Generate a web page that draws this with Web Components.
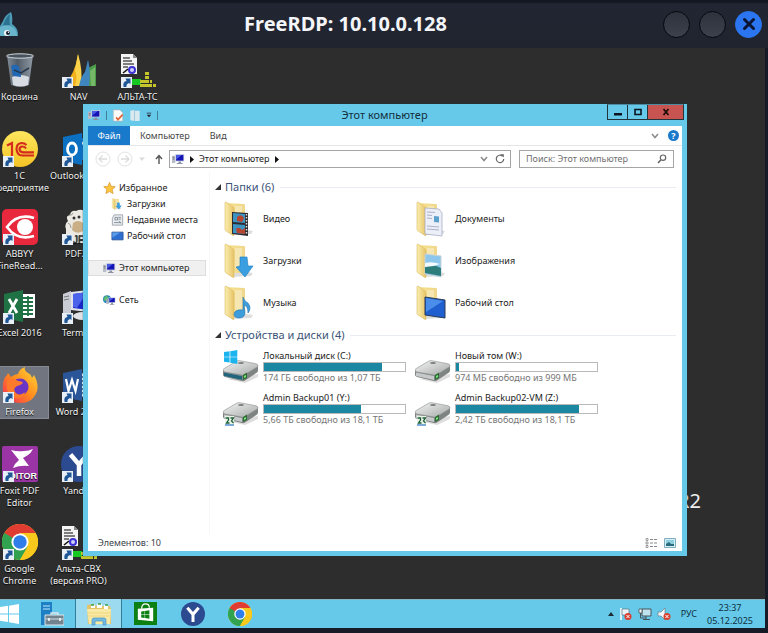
<!DOCTYPE html>
<html lang="ru">
<head>
<meta charset="utf-8">
<title>FreeRDP: 10.10.0.128</title>
<style>
  html, body { height: 100%; margin: 0; }
  body {
    overflow: hidden; background: #171b28;
    font-family: "Noto Sans", "Open Sans", sans-serif;
    font-size: 9px; line-height: 12px; color: #222;
    --aero: #66c9ea;
  }
</style>
</head>
<body>
<rdp-session heading="FreeRDP: 10.10.0.128">
  <desk-top slot="screen">
    <desk-icon slot="icons" icon="trash" plain>Корзина</desk-icon>
    <desk-icon slot="icons" icon="onec">1С Предприятие</desk-icon>
    <desk-icon slot="icons" icon="abbyy">ABBYY FineRead...</desk-icon>
    <desk-icon slot="icons" icon="excel">Excel 2016</desk-icon>
    <desk-icon slot="icons" icon="firefox" selected>Firefox</desk-icon>
    <desk-icon slot="icons" icon="foxit">Foxit PDF Editor</desk-icon>
    <desk-icon slot="icons" icon="chrome">Google Chrome</desk-icon>
    <desk-icon slot="icons" icon="nav">NAV</desk-icon>
    <desk-icon slot="icons" icon="outlook">Outlook&nbsp;2016</desk-icon>
    <desk-icon slot="icons" icon="pdf">PDF24</desk-icon>
    <desk-icon slot="icons" icon="terms">Terms...</desk-icon>
    <desk-icon slot="icons" icon="word">Word 2016</desk-icon>
    <desk-icon slot="icons" icon="yandex">Yandex</desk-icon>
    <desk-icon slot="icons" icon="alta">Альта-СВХ (версия PRO)</desk-icon>
    <desk-icon slot="icons" icon="alta">АЛЬТА-ТС</desk-icon>
    <span slot="brand">R2</span>
    <explorer-window slot="windows" heading="Этот компьютер">
      <nav-item slot="nav" icon="star">Избранное</nav-item>
      <nav-item slot="nav" icon="fdownload" sub>Загрузки</nav-item>
      <nav-item slot="nav" icon="recent" sub>Недавние места</nav-item>
      <nav-item slot="nav" icon="desk" sub>Рабочий стол</nav-item>
      <nav-item slot="nav" icon="pc" spaced current>Этот компьютер</nav-item>
      <nav-item slot="nav" icon="net" spaced>Сеть</nav-item>
      <item-group heading="Папки (6)">
        <folder-tile icon="fvideo">Видео</folder-tile>
        <folder-tile icon="fdocs">Документы</folder-tile>
        <folder-tile icon="fdownload">Загрузки</folder-tile>
        <folder-tile icon="fimages">Изображения</folder-tile>
        <folder-tile icon="fmusic">Музыка</folder-tile>
        <folder-tile icon="fdesk">Рабочий стол</folder-tile>
      </item-group>
      <item-group heading="Устройства и диски (4)">
        <drive-tile icon="drivec" used="84" note="174 ГБ свободно из 1,07 ТБ">Локальный диск (C:)</drive-tile>
        <drive-tile icon="drive" used="2" note="974 МБ свободно из 999 МБ">Новый том (W:)</drive-tile>
        <drive-tile icon="driven" used="69" note="5,66 ТБ свободно из 18,1 ТБ">Admin Backup01 (Y:)</drive-tile>
        <drive-tile icon="driven" used="87" note="2,42 ТБ свободно из 18,1 ТБ">Admin Backup02-VM (Z:)</drive-tile>
      </item-group>
    </explorer-window>
  </desk-top>
  <task-bar slot="bar"></task-bar>
</rdp-session>

<script>
const monitor = (x, y, s) => `<g transform="translate(${x} ${y}) scale(${s})"><path d="M0 3h4v9H0z" fill="#b8bcc6"/><path d="M1 5h2M1 7h2" stroke="#667"/><path d="M4 1h11v9H4z" fill="#c9cfe2"/><path d="M5 2h9v7H5z" fill="#1414b4"/><path d="M5 2h7L5 8z" fill="#4a5ae0"/><path d="M8 10h3v2h2v1H6v-1h2z" fill="#8c92a4"/></g>`;
const folder = inner => `<defs><linearGradient id="a"><stop stop-color="#f6e08c"/><stop offset="1" stop-color="#efd88c"/></linearGradient><linearGradient id="b"><stop stop-color="#fbeeb0"/><stop offset="1" stop-color="#e6c468"/></linearGradient></defs><path d="M8 34l20-1 2-3-18-3z" fill="#0002"/><path d="M3 2l18 1q1 0 1 1v26H10z" fill="url(#a)"/><path d="M12 5h7v20h-7z" fill="#fff5"/><path d="M2 2q0-1 1-1l7 5q1 1 1 2v26q0 1-1 .5L3 30q-1-.5-1-2z" fill="url(#b)" stroke="#dcbb62" stroke-width=".6"/>${inner}`;
const disk = extra => `<defs><linearGradient id="a" x2="1" y2="1"><stop stop-color="#f4f4f4"/><stop offset="1" stop-color="#a6a8a8"/></linearGradient></defs><path d="M4 30l18 4 13-6v-3z" fill="#0002"/><path d="M0 21v5q0 1 2 2l17 4q2 .5 3-.5l12-8q1-1 1-2v-5z" fill="#7e8482"/><path d="M0 21q0-1 2-2l12-7q1-.6 3-.3l16 3q2 .6 2 2 0 1-1 1.500l-12 7.400q-1.500 .7-3 .5L2 23q-2-.5-2-2z" fill="url(#a)" stroke="#8b8f8f" stroke-width=".6"/><path d="M1 23.500l18 3.500v4L1 27z" fill="#c6c9c9"/><ellipse cx="18" cy="14" rx="3" ry="1" fill="#7a7e7e"/><path d="M20 26l4-2.500v5.500l-4 2z" fill="#2c6b35"/><path d="M21 27l2-1v2l-2 1z" fill="#7bea7b"/>${extra}`;
const chrome = `<circle cx="18" cy="18" r="18" fill="#f8c91c"/><path d="M2.400 9A18 18 0 0 1 33.600 9H18L10.200 22.500z" fill="#e03c31"/><path d="M2.400 9A18 18 0 0 0 18 36L25.800 22.500 18 18z" fill="#31a350"/><path d="M18 9h15.600A18 18 0 0 1 18 36l7.800-13.500z" fill="#f8c91c"/><circle cx="18" cy="18" r="8.600" fill="#fff"/><circle cx="18" cy="18" r="6.700" fill="#2f7de8"/>`;
const yandex = `<circle cx="18" cy="18" r="18" fill="#2b4a8f"/><path d="M9.500 8.500L18 18.500 26.500 8.500M18 18v12" fill="none" stroke="#fff" stroke-width="4.500"/>`;
const flagWin = (x, y, s, c) => `<path transform="translate(${x} ${y}) scale(${s})" fill="${c}" d="M0 3l8-1.200V9.500H0zM9 1.700L19 0v9.500H9zM0 10.500h8V18l-8-1.200zM9 10.500h10V20L9 18.300z"/>`;
const cross = (x, y) => `<circle cx="${x}" cy="${y}" r="3.500" fill="#d8412f"/><path d="M${x-1.500} ${y-1.500}l3 3m0-3l-3 3" stroke="#fff" stroke-width="1"/>`;

const ICONS = {
  trash: ['36 36', `<defs><linearGradient id="a"><stop stop-color="#8b97a4"/><stop offset=".4" stop-color="#56616e"/><stop offset="1" stop-color="#9aa5b0"/></linearGradient></defs><path d="M5 3l4 30q9 4 18 0l4-30z" fill="url(#a)" opacity=".9"/><path d="M10 25q8-4 17 0l-1 8q-8 3-15 0z" fill="#d7dde2"/><path d="M9 14q6-3 8 1t2 10l-8-1z" fill="#2268b5"/><path d="M12 18l7 3 8-5" stroke="#26384c" stroke-width="1.500" fill="none"/><ellipse cx="18" cy="4" rx="13.500" ry="2.200" fill="#48525c" stroke="#d4dbe0"/>`],
  onec: ['36 36', `<defs><linearGradient id="a" x2="0" y2="1"><stop stop-color="#ffe75e"/><stop offset="1" stop-color="#f3c325"/></linearGradient></defs><circle cx="18" cy="18" r="18" fill="url(#a)"/><path d="M5 14.500l5-2.500v13M24.500 14q-2-2-5-2-5 .5-5 6 .5 6.500 6 6.500H32M24 17.500q-1-2-3.500-2-3 0-3 3 .5 2.800 4 2.800H32" fill="none" stroke="#d42b1e" stroke-width="2.200"/>`],
  abbyy: ['36 36', `<rect width="36" height="36" rx="5" fill="#e8283c"/><path d="M32 9Q15 4 5 18q10 14 27 9" fill="none" stroke="#fff" stroke-width="2.600"/><circle cx="23" cy="18" r="8" fill="#fff"/>`],
  excel: ['36 36', `<path d="M18 6h15v24H18z" fill="#fff"/><path d="M20 10h11M20 14h11M20 18h11M20 22h11M20 26h11M26 8v20" stroke="#207245" stroke-width="1.800"/><path d="M2 6l19-4v32L2 30z" fill="#1f7244"/><path d="M7 11l8 14M15 11L7 25" stroke="#fff" stroke-width="2.800"/>`],
  firefox: ['36 36', `<defs><linearGradient id="a" x1="1" x2="0" y2="1"><stop stop-color="#ffe03a"/><stop offset=".5" stop-color="#ff8a1e"/><stop offset="1" stop-color="#f5245c"/></linearGradient></defs><path d="M3 10q2-1 3-4l3 4q4-3 7-3 1-5 7-7-1 4 3 6 3 1 4 5l2-3q5 9 3 16-4 12-16 12Q5 36 1 24q-1-8 2-14z" fill="url(#a)"/><circle cx="18" cy="20" r="8.500" fill="#6a35c4"/><path d="M5 14q6-4 11 0 4 0 5 2-3 3-6 3-4 2-2 6 4 5 10 0-2 8-10 6Q3 28 5 14z" fill="#ff7a2a"/>`],
  foxit: ['36 36', `<rect width="36" height="36" rx="2" fill="#9b35a6"/><path d="M9 4q7 2 13 1 5 0 9-2-2 4-5 6l-5 3 6 8q-9-1-16 2 2-5 6-8z" fill="#fff"/><text x="35" y="33" text-anchor="end" font-family="Liberation Sans,sans-serif" font-weight="bold" font-size="9" fill="#fff">EDITOR</text>`],
  chrome: ['36 36', chrome],
  yandex: ['36 36', yandex],
  nav: ['36 36', `<path d="M3 34Q14 22 17 2q3 14 1 32z" fill="#f2b01d"/><path d="M17 34q9-9 10-26 2 14 1 26z" fill="#2f78b7"/><path d="M27 34q-2-14 0-18l8-4v22z" fill="#4a9c4a"/><path d="M14 18q3 8 0 16h6q2-16-3-32z" fill="#fbd44c"/><path d="M18 34q2-10 6-14l3-12q3 12 1 26z" fill="#3f86bf"/><path d="M29 19l5-4v19h-4z" fill="#76b868"/>`],
  outlook: ['36 36', `<path d="M18 7h18v22H18z" fill="#1a77c9"/><path d="M19 10l9 8 8-8" stroke="#fff" fill="none" stroke-width="2"/><path d="M2 6l19-4v32L2 30z" fill="#0b6fc2"/><ellipse cx="11" cy="18" rx="4.500" ry="6" fill="none" stroke="#fff" stroke-width="2.800"/>`],
  word: ['36 36', `<path d="M18 6h15v24H18z" fill="#fff" stroke="#2a5699"/><path d="M20 10h11M20 14h11M20 18h11M20 22h11M20 26h11" stroke="#2a5699" stroke-width="1.600"/><path d="M2 6l19-4v32L2 30z" fill="#2a5699"/><path d="M5 12l2.500 12 3.500-11 3.500 11L17 12" stroke="#fff" fill="none" stroke-width="2.200"/>`],
  pdf: ['36 36', `<path d="M7 12q-3-5 2-6 1-5 6-4 6-3 9 1 6 0 5 6 5 4 1 9v16H5V20q-2-5 2-8z" fill="#ece9e2"/><circle cx="13" cy="9" r="1.500" fill="#333"/><circle cx="18" cy="8" r="1.500" fill="#333"/><path d="M12 14q5-4 10 0v8q-6 4-11-1z" fill="#c9ae86"/><path d="M8 6q3 1 4-2M7 14q3 1 3 5" stroke="#999" fill="none"/><text x="12" y="34" font-family="Liberation Sans,sans-serif" font-size="10" fill="#333">JF</text>`],
  terms: ['36 36', `<path d="M2 6l8-3v26l-8-3z" fill="#c9ccd4"/><path d="M3 9l5-1M3 12l5-1" stroke="#777"/><path d="M10 4l26-3v24l-26-3z" fill="#dfe2ea"/><path d="M12 6l24-3v20l-24-3z" fill="#1826c8"/><path d="M12 6l14-2-10 16-4-1z" fill="#4b62ea"/><ellipse cx="22" cy="28" rx="10" ry="4" fill="#dfe1e6"/>`],
  alta: ['36 36', `<path d="M1 2h12l4 4v16H1z" fill="#f4f4f4"/><path d="M13 2v4h4" fill="#888"/><path d="M3 6h7M3 9h9M3 12h11M3 15h5" stroke="#555" stroke-width="1.300"/><path d="M3 21l5-4" stroke="#111" stroke-width="1.600"/><circle cx="12" cy="18" r="3" fill="#cfd0ff" stroke="#3c32d2" stroke-width="2"/><path d="M12 27h9v6h-9z" fill="#15c922"/><path d="M20 28h5v3h-5zM20 32h5v3h-5zM25 20h4v3h-4zM25 24h4v3h-4zM25 28h4v3h-4zM25 32h4v3h-4zM30 28h2v3h-2zM29 32h3v3h-3zM33 32h3v3h-3z" fill="#c3c52a"/>`],
  badge: ['11 11', `<path d="M0 0h11v11H0z" fill="#e9eff6"/><path d="M2.500 10Q1.500 4.500 5.500 4L4.500 1.500H9.500v5.500L8 6Q5 7 5.500 10z" fill="#1f5695"/>`],
  dragon: ['20 28', `<path d="M0 26V16l3-5Q5 5 11 2q2 5 1 12 5 3 6 9l-1 3z" fill="#4d9bb5"/><path d="M3 15q3-8 7-11-1 7 0 11z" fill="#2a7390"/><path d="M0 17q9-4 15 2l3 7H0z" fill="#68b5cc"/><circle cx="7" cy="23" r="3" fill="#f5f5f5"/><circle cx="8" cy="23" r="2" fill="#123"/><circle cx="8.500" cy="22.300" r=".7" fill="#fff"/>`],
  closex: ['14 14', `<path d="M2.500 2.500l9 9m0-9l-9 9" stroke="#0b1430" stroke-width="3" stroke-linecap="round"/>`],
  pc: ['16 14', monitor(0, 0, 1)],
  net: ['16 14', `<circle cx="5" cy="6" r="5" fill="#2f86b8"/><path d="M2 3q3-2 4 0t-2 4-3 0zM6 8l3-2-1 5z" fill="#5cc06a"/>` + monitor(4, 3, .75)],
  star: ['14 14', `<path d="M7 .5l2 4.500 4.700.5-3.500 3.300 1 4.700L7 11.200l-4.200 2.300 1-4.700L.3 5.500 5 5z" fill="#fbc540" stroke="#d8902a" stroke-width=".8"/>`],
  recent: ['14 14', `<path d="M3 1h10v12H1V5z" fill="#e8ecef" stroke="#9aa2a8"/><path d="M4 4h3v3H4zM8 4h3M8 6h3M3 10h8M9 8l2 3" stroke="#7f8b95" fill="none"/>`],
  desk: ['14 14', `<path d="M.5 2.500h13v9H.5z" fill="#2c6fd0" stroke="#31549a"/><path d="M1 3h9l-9 6z" fill="#5b9be8"/>`],
  qdoc: ['12 14', `<path d="M1 1h7l3 3v9H1z" fill="#fbfbfb" stroke="#b6b6b6" stroke-width=".7"/><path d="M4 9l2 2.500L11 6" stroke="#e0673a" stroke-width="1.800" fill="none"/>`],
  qfolder: ['12 14', `<path d="M1 2l4-1v12l-4-1zM6 2h5v11H6z" fill="#d9e9f0"/><path d="M5 1l1 1v11l-1-1z" fill="#a9c6d6"/>`],
  qdrop: ['8 8', `<path d="M1 1.500h6" stroke="#223"/><path d="M1 3.500h6L4 7z" fill="#223"/>`],
  back: ['16 16', `<circle cx="8" cy="8" r="7" fill="none" stroke="#e2e2e2"/><path d="M12 8H4.500M7.500 4.500L4 8l3.500 3.500" stroke="#dcdcdc" fill="none" stroke-width="1.300"/>`],
  fwd: ['16 16', `<circle cx="8" cy="8" r="7" fill="none" stroke="#e2e2e2"/><path d="M4 8h7.500M8.500 4.500L12 8l-3.500 3.500" stroke="#dcdcdc" fill="none" stroke-width="1.300"/>`],
  down: ['6 4', `<path d="M0 .5h6L3 4z" fill="#dcdcdc"/>`],
  up: ['8 10', `<path d="M4 10V1.500M1 5l3-3.500L7 5" stroke="#555" stroke-width="1.400" fill="none"/>`],
  tri: ['4 7', `<path d="M0 0l4 3.500L0 7z" fill="#111"/>`],
  chev: ['8 6', `<path d="M1 1l3 3.500L7 1" fill="none" stroke="#8a8a8a" stroke-width="1.500"/>`],
  refresh: ['10 10', `<path d="M7.500 2.200A3.700 3.700 0 1 0 8.700 5" fill="none" stroke="#666" stroke-width="1.200"/><path d="M5.500 .3h3.300v3.300z" fill="#666"/>`],
  lens: ['10 10', `<circle cx="6" cy="3.700" r="2.700" fill="none" stroke="#666" stroke-width="1.200"/><path d="M4 5.800L1 9" stroke="#666" stroke-width="1.600"/>`],
  expand: ['6 6', `<path d="M6 0v6H0z" fill="#333"/>`],
  list: ['12 10', `<path d="M1 .5h2v2H1zM1 4h2v2H1zM1 7.500h2v2H1z" fill="none" stroke="#888" stroke-width=".8"/><path d="M5 1.500h3M9 1.500h3M5 5h3M9 5h3M5 8.500h3M9 8.500h3" stroke="#888"/>`],
  thumbs: ['12 10', `<path d="M.5.5h11v9H.5z" fill="#d8edf3" stroke="#7eafc0"/><path d="M2 2h8v6H2z" fill="#8cd0df"/><path d="M2 6l3-2 2 2h3v2H2z" fill="#276a7c"/>`],
  wmin: ['10 10', `<path d="M1 6h8v2.500H1z" fill="#0a1420"/>`],
  wmax: ['10 10', `<path d="M2 2.500h6v5H2z" fill="none" stroke="#0a1420" stroke-width="1.600"/>`],
  wclose: ['10 10', `<path d="M2.500 2l5 6m0-6l-5 6" stroke="#1c0a0a" stroke-width="1.700"/>`],
  fvideo: ['36 36', folder(`<path d="M9 11l16 1v23l-16-2z" fill="#2b2b30"/><path d="M10 12l12 1v9l-12-1zM10 23l12 1v9l-12-1z" fill="#3d93c2"/><path d="M14 16q4-4 7 1l-2 4-5-1zM13 28q3-3 6 1l3-2v6l-8-1z" fill="#b7452f"/><path d="M23.500 13v21" stroke="#ddd" stroke-dasharray="1.500 1.500" stroke-width="1.500"/>`)],
  fdownload: ['36 36', folder(`<path d="M17 14h7l1 9h5l-8 11-9-10 4-1z" fill="#3a9fe0" stroke="#1a7bc0" stroke-width=".6"/>`)],
  fmusic: ['36 36', folder(`<path d="M20 12q1 4 5 6 4 5 0 10 0-7-4-8l1 7q0 6-6 6-5 0-5-4 1-5 9-4z" fill="#3d9ddb" stroke="#2176b5" stroke-width=".6"/>`)],
  fdocs: ['36 36', folder(`<path d="M10 7l14 1 3 4v23l-17-2z" fill="#eceef8" stroke="#9fa4bf" stroke-width=".7"/><path d="M12 11l8 .5M12 14l5 .5M12 17l5 .5M12 25l12 1M12 28l12 1" stroke="#aab2c8"/><path d="M19 15l5 .5v6L19 21z" fill="#5ca0cc"/>`)],
  fimages: ['36 36', folder(`<path d="M10 11l16 2v21l-16-3z" fill="#8cc6ec" stroke="#c8d3da"/><path d="M10 24q7-4 16 1v8l-16-3z" fill="#2d7d7d"/><path d="M10 20q7-2 15 1-7 3-15 3z" fill="#f2fafd"/>`)],
  fdesk: ['36 36', folder(`<path d="M10 12l20 3v18l-20-3z" fill="#1f5fd0" stroke="#2d3a52"/><path d="M11 13l17 3-17 11z" fill="#4b8eea"/>`)],
  drive: ['36 36', disk('')],
  drivec: ['36 36', disk('<path d="M1 23.500l18 3.500v4L1 27z" fill="#21647c"/>') + flagWin(1, 1, .7, '#1cb4ee')],
  driven: ['36 36', disk('') + `<path d="M2 25h9v9H2z" fill="#e8f3e8"/><path d="M2.500 27h3v2l-2 3h3M7.500 27h3l-2 3 2 2" stroke="#1f5e35" stroke-width="1.300" fill="none"/><path d="M2 34h9" stroke="#2d76c8" stroke-width="1.200"/>`],
  start: ['19 20', flagWin(0, 0, 1, '#fff')],
  server: ['24 24', `<path d="M1 0h11v23H1z" fill="#1d7fc4"/><path d="M3 4h7M3 7h7" stroke="#8cc6ea" stroke-width="1.300"/><path d="M5 13h19v10H5z" fill="#70838f" stroke="#dce8ee"/><path d="M11 13v-2h7v2" fill="none" stroke="#dce8ee" stroke-width="1.300"/><path d="M6 17h17" stroke="#d5e0e6"/><path d="M9 16v3M20 16v3" stroke="#fff" stroke-width="1.500"/>`],
  explorer: ['26 24', `<path d="M1 3l7-1 2 2h14l1 4v14H2z" fill="#e3c469"/><path d="M5 3h4v3H5zM11 2h5v4h-5zM18 3h4v4h-4z" fill="#fff"/><path d="M5 3h3M12 2h3M19 3h3" stroke="#3c9a4a" stroke-width="1.500"/><path d="M1 7h24l-1 15H3z" fill="#f8e9a4"/><path d="M2 11h22M2 14h22" stroke="#efd681"/><path d="M6 23v-5q0-2 2-2h10q2 0 2 2v5h-3v-4H9v4z" fill="#6fb9e4" stroke="#4a95c4" stroke-width=".7"/>`],
  store: ['24 24', `<path d="M0 0h24v24H0z" fill="#0c8013"/><path d="M4 7l16-1v14L4 18.500z" fill="#fff"/><path d="M8 7q0-5 4-5t4 4" fill="none" stroke="#fff" stroke-width="1.300"/>` + flagWin(7.500, 8.500, .45, '#0c8013')],
  flag: ['14 14', `<path d="M2 1v12" stroke="#fff" stroke-width="1.600"/><path d="M3 2h7v6H3z" fill="#e8f4f8" stroke="#55636b" stroke-width=".6"/>` + cross(9, 9.500)],
  lan: ['14 14', `<path d="M4 2h9v7H4z" fill="#bfe3ef" stroke="#46545c"/><path d="M1 2h3v4H1z" fill="#f4f4f4" stroke="#46545c" stroke-width=".8"/><path d="M2.500 6v5H8M8 9v3M5 12.500h7" stroke="#46545c" fill="none"/>`],
  mute: ['14 14', `<path d="M1 5h3l4-4v12L4 9H1z" fill="#f2f6f8" stroke="#6b7b84" stroke-width=".7"/>` + cross(10, 9.500)],
  tup: ['6 4', `<path d="M0 4h6L3 0z" fill="#1b2a33"/>`]
};

class UiIcon extends HTMLElement {
  connectedCallback() {
    const [box, art] = ICONS[this.getAttribute('name')];
    const [bw, bh] = box.split(' ');
    const w = this.getAttribute('w') || bw, h = this.getAttribute('h') || bh;
    const root = this.shadowRoot || this.attachShadow({ mode: 'open' });
    root.innerHTML = `<style>:host{display:block;flex:none;width:${w}px;height:${h}px}svg{display:block;width:100%;height:100%}</style><svg viewBox="0 0 ${box}" aria-hidden="true">${art}</svg>`;
  }
}

const RESET = `*{box-sizing:border-box}button{font:inherit;color:inherit;background:none;border:0;padding:0;margin:0}`;
const define = (name, render) => customElements.define(name, class extends HTMLElement {
  connectedCallback() {
    if (this.shadowRoot) return;
    this.attachShadow({ mode: 'open' }).innerHTML = render(this);
  }
});
const at = (el, n) => el.getAttribute(n) || '';

define('rdp-session', el => `<style>${RESET}
  :host{display:flex;flex-direction:column;min-height:100%;height:100%}
  header{display:flex;align-items:center;height:48px;padding-right:6px;
    background:linear-gradient(#131722 0 2px,#222632 4px,#20242f);flex:none}
  h1{flex:1;margin:0;padding-left:8px;text-align:center;font-size:20px;line-height:28px;font-weight:700;color:#f4f5f8}
  .ctl{display:flex;gap:9px;justify-content:flex-end}
  .ctl button{width:27px;height:27px;border-radius:50%;background:linear-gradient(#2d323d,#3c414c);border:1px solid #06080e;display:grid;place-items:center}
  .ctl .x{background:#2b76f0;border-color:#2b76f0}
  .screen{flex:1;min-height:0;padding-right:3px;display:flex;flex-direction:column}
  .bar{padding:0 3px 5px 0}
</style><header><ui-icon name="dragon" w="20" h="28"></ui-icon><h1>${at(el,'heading')}</h1>
<div class="ctl"><button aria-label="Свернуть"></button><button aria-label="Развернуть"></button><button class="x" aria-label="Закрыть"><ui-icon name="closex"></ui-icon></button></div></header>
<div class="screen"><slot name="screen"></slot></div><div class="bar"><slot name="bar"></slot></div>`);

define('desk-top', () => `<style>
  :host{display:block;position:relative;flex:1;min-height:0;background:#2d2d2d;overflow:hidden}
  .icons{display:grid;grid-auto-flow:column;grid-template-rows:repeat(7,1fr);grid-auto-columns:59px;height:100%;margin-left:-10px}
  .brand{position:absolute;right:64px;bottom:84px;font-size:20px;line-height:28px;color:#eee}
  .win{position:absolute;left:83px;right:78px;top:56px;bottom:43px;display:flex}
</style><div class="icons"><slot name="icons"></slot></div><div class="brand"><slot name="brand"></slot></div><div class="win"><slot name="windows"></slot></div>`);

define('desk-icon', el => `<style>${RESET}
  :host{display:block;min-width:0;padding-top:3px}
  button{display:flex;flex-direction:column;align-items:center;width:100%;padding:1px 1px 0;color:#f2f2f2;text-shadow:0 1px 1px #000}
  :host([selected]) button{background:#70757f;padding-bottom:1px;outline:1px solid #858a94;outline-offset:-1px}
  .pic{position:relative;margin-bottom:3px}
  .badge{position:absolute;left:1px;bottom:0}
  span{text-align:center}
</style><button><div class="pic"><ui-icon name="${at(el,'icon')}"></ui-icon>${el.hasAttribute('plain') ? '' : '<ui-icon class="badge" name="badge"></ui-icon>'}</div><span><slot></slot></span></button>`);

define('explorer-window', el => `<style>${RESET}
  :host{display:flex;flex-direction:column;flex:1;min-width:0;background:var(--aero);padding:0 5px 5px;box-shadow:0 0 1px #1b3a47}
  .cap{display:flex;height:22px;flex:none}
  .quick{display:flex;align-items:center;gap:5px;width:74px}
  .quick i{flex:none;width:1px;height:9px;background:#3f7f97}
  h2{flex:1;margin:0;text-align:center;font-size:11px;line-height:22px;font-weight:400;color:#14303c}
  .btns{display:flex;height:16px;margin-right:-2px;border:1px solid #22333b;border-top-color:#4c8ba1}
  .btns button{width:20px;display:grid;place-items:center;border-right:1px solid #22333b}
  .btns .x{width:35px;background:#c75450;border:0}
  .body{flex:1;min-height:0;background:#fff;display:flex;flex-direction:column}
  .tabs{display:flex;height:20px;border-bottom:1px solid #e4e6e8;align-items:stretch;color:#444}
  .tabs button{padding:0 10px}
  .tabs .on{width:42px;padding:0;background:#1979ca;color:#fff}
  .tabs .end{margin-left:auto;display:flex;gap:9px;align-items:center;padding-right:3px}
  .tabs .end button{padding:0}
  .tabs .end .help{width:11px;height:11px;border-radius:50%;background:#1979ca;color:#fff;font-weight:700;line-height:11px}
  .addr{display:flex;align-items:center;height:26px;padding:0 8px 0 7px;flex:none}
  .hist{display:flex;align-items:center;gap:6px;width:74px}
  .hist button:last-child{margin-left:4px}
  .box{display:flex;align-items:center;height:18px;border:1px solid #a5a5a5;background:#fff}
  .path{flex:1;gap:5px;padding:0 5px 0 2px}
  .path .r{margin-left:auto;display:flex;gap:7px;align-items:center}
  .search{width:155px;margin-left:8px;padding:0 6px}
  input{flex:1;min-width:0;border:0;padding:0;background:none;outline:0;font:inherit;color:#444}
  input::placeholder{color:#707070;opacity:1}
  .main{flex:1;min-height:0;display:flex}
  nav{width:122px;flex:none;padding-top:8px;border-right:1px solid #f7f7f7}
  main{flex:1;min-width:0;padding:7px 6px 0 5px}
  footer{display:flex;align-items:center;gap:7px;height:17px;padding:0 6px 0 10px;color:#3a3f4a;flex:none}
  footer span{margin-right:auto}
</style>
<div class="cap"><div class="quick"><ui-icon name="pc" w="13" h="12"></ui-icon><i></i><ui-icon name="qdoc" w="12" h="13"></ui-icon><ui-icon name="qfolder" w="12" h="13"></ui-icon><ui-icon name="qdrop" w="6" h="6"></ui-icon><i></i></div>
<h2>${at(el,'heading')}</h2>
<div class="btns"><button aria-label="Свернуть"><ui-icon name="wmin"></ui-icon></button><button aria-label="Развернуть"><ui-icon name="wmax"></ui-icon></button><button class="x" aria-label="Закрыть"><ui-icon name="wclose"></ui-icon></button></div></div>
<div class="body">
<div class="tabs"><button class="on">Файл</button><button>Компьютер</button><button>Вид</button><div class="end"><button aria-label="Лента"><ui-icon name="chev"></ui-icon></button><button class="help">?</button></div></div>
<div class="addr"><div class="hist"><button aria-label="Назад"><ui-icon name="back"></ui-icon></button><button aria-label="Вперед"><ui-icon name="fwd"></ui-icon></button><button aria-label="Журнал"><ui-icon name="down"></ui-icon></button><button aria-label="Вверх"><ui-icon name="up"></ui-icon></button></div>
<div class="box path"><ui-icon name="pc" w="13" h="12"></ui-icon><ui-icon name="tri"></ui-icon><button>Этот компьютер</button><ui-icon name="tri"></ui-icon><div class="r"><button aria-label="Адреса"><ui-icon name="chev"></ui-icon></button><button aria-label="Обновить"><ui-icon name="refresh"></ui-icon></button></div></div>
<div class="box search"><input type="text" aria-label="Поиск" placeholder="Поиск: Этот компьютер"><ui-icon name="lens"></ui-icon></div></div>
<div class="main"><nav><slot name="nav"></slot></nav><main><slot></slot></main></div>
<footer><span>Элементов: 10</span><button aria-label="Таблица"><ui-icon name="list"></ui-icon></button><button aria-label="Эскизы"><ui-icon name="thumbs"></ui-icon></button></footer>
</div>`);

define('nav-item', el => `<style>
  :host{display:block}
  :host([spaced]){margin-top:16px}
  a{display:flex;align-items:center;gap:3px;height:16px;margin-right:3px;padding-left:15px;color:inherit;text-decoration:none;white-space:nowrap;box-sizing:border-box}
  :host([sub]) a{padding-left:23px}
  :host([current]) a{background:#f0f0f0;box-shadow:inset 0 0 0 1px #dedede}
</style><a href="#"><ui-icon name="${at(el,'icon')}" w="13" h="12"></ui-icon><slot></slot></a>`);

define('item-group', el => `<style>
  :host{display:block}
  :host(:not(:first-of-type)){margin-top:3px}
  h3{display:flex;align-items:center;gap:4px;margin:0;height:16px;font-size:11px;line-height:16px;font-weight:400;color:#3b5378}
  h3::after{content:"";flex:1;height:1px;background:#e9ecf2;margin-left:2px}
  .grid{display:grid;grid-template-columns:repeat(auto-fill,192px);grid-auto-rows:42px;padding:3px 0 0 8px}
</style><h3><ui-icon name="expand"></ui-icon>${at(el,'heading')}</h3><div class="grid"><slot></slot></div>`);

define('folder-tile', el => `<style>:host{display:flex;align-items:center;gap:4px}</style><ui-icon name="${at(el,'icon')}"></ui-icon><slot></slot>`);

define('drive-tile', el => `<style>
  :host{display:flex;align-items:center;gap:4px}
  .info{width:143px;white-space:nowrap}
  small{display:block;font-size:9px;color:#757575}
  progress{display:block;appearance:none;width:100%;height:10px;border:1px solid #b9b9b9;background:#fff;box-sizing:border-box}
  progress::-webkit-progress-bar{background:#fff}
  progress::-webkit-progress-value{background:#1b87a3}
  label{display:block}
</style><ui-icon name="${at(el,'icon')}"></ui-icon><div class="info"><label for="p"><slot></slot></label><progress id="p" max="100" value="${at(el,'used')}"></progress><small>${at(el,'note')}</small></div>`);

define('task-bar', () => `<style>${RESET}
  :host{display:flex;height:29px;background:var(--aero);box-shadow:inset 0 1px #86b5c6;color:#10303d}
  button{display:grid;place-items:center;width:47px}
  .start{width:28px;place-items:center start}
  .on{width:45px;margin:0 1px;background:#9bdaef;box-shadow:-1px 0 #2f7f99,1px 0 #2f7f99}
  .tray{margin-left:auto;display:flex;align-items:center;gap:5px;padding-right:12px}
  .tray button{width:auto}
  .lang{margin:0 5px}
  .clock{line-height:13px;text-align:center}
</style>
<button class="start" aria-label="Пуск"><ui-icon name="start"></ui-icon></button>
<button aria-label="Диспетчер серверов"><ui-icon name="server"></ui-icon></button>
<button class="on" aria-label="Проводник"><ui-icon name="explorer"></ui-icon></button>
<button aria-label="Магазин"><ui-icon name="store" w="23" h="23"></ui-icon></button>
<button aria-label="Yandex"><ui-icon name="yandex" w="24" h="24"></ui-icon></button>
<button aria-label="Chrome"><ui-icon name="chrome" w="24" h="24"></ui-icon></button>
<div class="tray"><button aria-label="Скрытые значки"><ui-icon name="tup"></ui-icon></button>
<ui-icon name="flag"></ui-icon><ui-icon name="lan"></ui-icon><ui-icon name="mute"></ui-icon>
<button class="lang">РУС</button><time class="clock" datetime="2025-12-05T23:37">23:37<br>05.12.2025</time></div>`);

customElements.define('ui-icon', UiIcon);
</script>
</body>
</html>
